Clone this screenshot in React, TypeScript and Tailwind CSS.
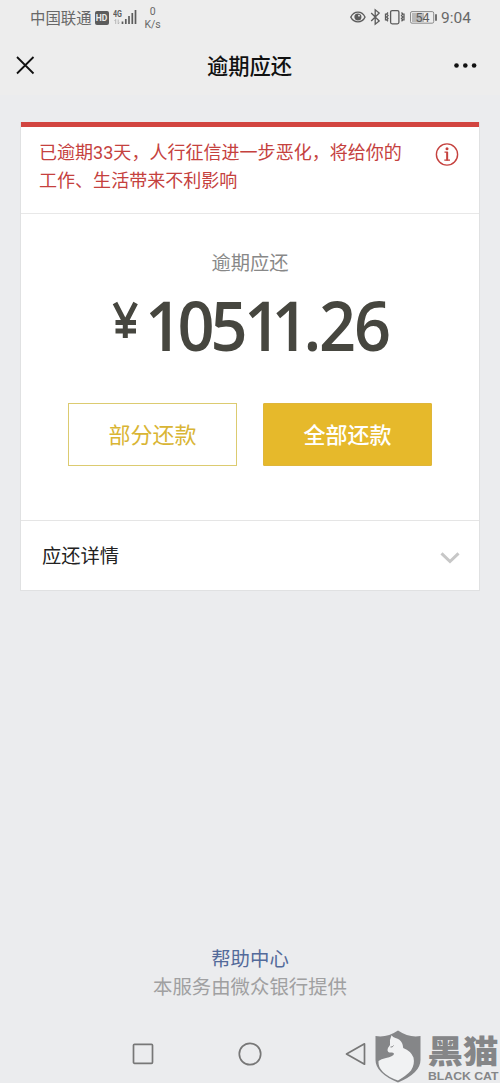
import React from "react";

function StatusBar() {
  return (
    <div className="flex h-[36px] items-start justify-between pl-[30px] pr-[28px] text-[#686868]">
      <div className="flex items-start">
        <span className="mt-[8px] text-[15.4px] leading-[22px]">中国联通</span>
        <span className="ml-[3px] mt-[11px] flex h-[14px] w-[14px] items-center justify-center rounded-[2px] bg-[#5c5c5c] font-['Roboto',sans-serif] text-[8.5px] font-bold text-[#ededed]">
          HD
        </span>
        <svg className="ml-[4px] mt-[8px]" width="26" height="18" viewBox="0 0 26 18">
          <text x="0" y="9" fontSize="8.5" fontWeight="700" fontFamily="Roboto, sans-serif" fill="#5c5c5c" textLength="9" lengthAdjust="spacingAndGlyphs">4G</text>
          <path d="M2.7 16v-4.5l-1.2 1.4M5.2 11.5v4.5l1.2-1.4" stroke="#aaa" strokeWidth=".8" fill="none" />
          <path d="M9.5 16v-2.5M12.800 16v-5M16 16v-8M19.300 16v-11M22.500 16v-14" stroke="#5c5c5c" strokeWidth="1.700" />
        </svg>
        <span className="ml-[5px] mt-[6px] flex w-[18px] flex-col items-center font-['Roboto',sans-serif] text-[10.500px] leading-[12.500px]">
          <span>0</span>
          <span>K/s</span>
        </span>
      </div>
      <div className="flex items-start">
        <svg className="mt-[7px]" width="90" height="20" viewBox="0 0 90 20" fill="none" stroke="#5c5c5c" strokeWidth="1.300">
          <path d="M.8 10.100C4 3.400 12 3.400 15 10.100 12 16.400 4 16.400.8 10.100Z" />
          <circle cx="7.900" cy="10" r="2.900" fill="#5c5c5c" />
          <circle cx="9" cy="8.700" r=".9" fill="#ededed" stroke="none" />
          <path d="M21.200 6 29.200 14l-4 3.200V2.800l4 3.200-8 8" />
          <rect x="40.600" y="3.600" width="8.300" height="13.200" rx="1.500" />
          <path d="M38 5.500l-1.300 1.500 1.300 1.500-1.300 1.500 1.300 1.500-1.300 1.500 1.300 1.300M35.500 6.500v7M51.500 5.500l1.300 1.500-1.300 1.500 1.300 1.500-1.300 1.500 1.300 1.500-1.300 1.300M54 6.500v7" strokeWidth="1.300" />
          <rect x="60.500" y="4.600" width="23.200" height="11.600" rx="1.500" stroke="#8b8b8b" strokeWidth="1" />
          <rect x="62" y="6" width="12" height="9" fill="#b8b8b8" stroke="none" />
          <path d="M86 7.300v6.400" strokeWidth="1.700" />
          <text x="65.500" y="14.600" fontFamily="Roboto, sans-serif" fontSize="12.500" fill="#5c5c5c" stroke="none">54</text>
        </svg>
        <span className="ml-[1px] mt-[7px] w-[31px] whitespace-nowrap font-['Roboto',sans-serif] text-[15.500px] leading-[22px]">9:04</span>
      </div>
    </div>
  );
}

function TitleBar() {
  return (
    <header className="flex h-[59px] items-center justify-between pl-[16px] pr-[22px]">
      <svg width="30" height="20" viewBox="0 0 30 20" className="text-[#111]">
        <path d="M1 1 17.500 17.500M17.500 1 1 17.500" stroke="currentColor" strokeWidth="1.800" />
      </svg>
      <h1 className="mt-[2px] text-[21.300px] font-medium leading-[32px] text-[#111]">逾期应还</h1>
      <svg width="25" height="6" viewBox="0 0 25 6" fill="#111">
        <circle cx="3.500" cy="2.500" r="2.300" />
        <circle cx="12.300" cy="2.500" r="2.300" />
        <circle cx="21.100" cy="2.500" r="2.300" />
      </svg>
    </header>
  );
}

function Amount() {
  return (
    <div className="mt-[17px] flex h-[66px] justify-center text-[#46463f]">
      <svg width="300" height="66" viewBox="-10 0 300 66" fill="currentColor" className="overflow-visible">
        <path d="M5 8 15.300 28M25.600 8 15.300 28M15.300 26v17M5.500 27.500h20.500M5.500 36h20.500" stroke="currentColor" strokeWidth="5" fill="none" />
        <text
          x="37.2 71.8 106.9 142.5 171.8 205.9 222.3 259.6"
          y="56"
          transform="scale(.94 1)"
          fontFamily="'Open Sans', sans-serif"
          fontSize="69"
          fontWeight="650"
        >
          10511.26
        </text>
      </svg>
    </div>
  );
}

function Card() {
  return (
    <main className="mx-[20px] mt-[27px] h-[469px] border border-t-0 border-[#e0e1e2] bg-white">
      <div className="h-[5px] bg-[#d24540]" />
      <section className="flex h-[87px] justify-between border-b border-[#e8e8e8] pl-[18px] pr-[20px] pt-[12px] text-[#c5413e]">
        <p className="whitespace-nowrap text-[18.050px] leading-[28px]">
          已逾期33天，人行征信进一步恶化，将给你的
          <br />
          工作、生活带来不利影响
        </p>
        <svg className="mt-[3px]" width="24" height="24" viewBox="0 0 24 24" fill="none" stroke="currentColor">
          <circle cx="12" cy="12.500" r="10.600" strokeWidth="1.400" />
          <path d="M9.500 10.200h2.700v8M9.300 18.200h5.700" strokeWidth="1.200" />
          <path d="M12.200 10v8.500" strokeWidth="1.900" />
          <circle cx="12" cy="6.800" r="1.500" fill="currentColor" stroke="none" />
        </svg>
      </section>
      <section className="h-[307px] border-b border-[#e5e5e5] pt-[36px]">
        <h2 className="text-center text-[19.300px] leading-[28px] text-[#888]">逾期应还</h2>
        <Amount />
        <div className="mt-[42px] flex justify-center gap-[26px] text-[22px]">
          <button className="h-[63px] w-[169px] border border-[#dccb70] pt-[2px] text-[#d9b534]">部分还款</button>
          <button className="h-[63px] w-[169px] rounded-[1px] border border-[#dfb63a] bg-[#e6b92b] pt-[2px] font-medium text-white">全部还款</button>
        </div>
      </section>
      <section className="flex h-[69px] items-center justify-between pl-[21px] pr-[19px] text-[#222]">
        <span className="mt-[3px] text-[19.300px] leading-[28px]">应还详情</span>
        <svg className="mt-[4px]" width="20" height="12" viewBox="0 0 20 12">
          <path d="M1.500 1.300 10 9.500 18.500 1.300" fill="none" stroke="#c7c7c7" strokeWidth="3" />
        </svg>
      </section>
    </main>
  );
}

function Watermark() {
  return (
    <svg className="absolute left-[374px] top-[5px] overflow-visible" width="126" height="54" viewBox="0 0 126 54">
      <path d="M1.500 6Q13 8 24 .5 35 8 46.500 6v24q0 13-22.500 22.500Q1.500 43 1.500 30Z" fill="#858688" />
      <path d="M17.500 5.300Q19 7.500 21.500 8q4.500 1 6.500 5 1 2 1.200 5 7.800 3 10.300 9.500 1.500 7-2.500 13-4.500 5-13 10Q14 47 9 42q-5-5-4.500-11 2.500-2 7.500-3 7-1.500 8-4 0-1.500-2-1.500-4.500.5-4.500-2.500 0-2 2.500-5-.5-6 1.500-9.700Z" fill="#f1f2f3" />
      <path d="M16.500 17q2 .5 3-1.500" stroke="#858688" fill="none" />
      <text x="53.500" y="32.500" fontFamily="'Noto Sans CJK SC', sans-serif" fontWeight="900" fontSize="32" textLength="71" lengthAdjust="spacingAndGlyphs" fill="#858688">黑猫</text>
      <text x="54" y="50" fontFamily="'Liberation Sans', sans-serif" fontWeight="700" fontSize="11" textLength="70.500" lengthAdjust="spacingAndGlyphs" fill="#858688">BLACK CAT</text>
    </svg>
  );
}

function NavigationBar() {
  return (
    <nav className="relative flex h-[58px] items-center pl-[132px] text-[#777]">
      <svg width="236" height="26" viewBox="0 0 236 26" fill="none" stroke="currentColor" strokeWidth="1.700">
        <rect x="1.500" y="3.300" width="19" height="19" rx="1" />
        <circle cx="118" cy="13" r="10.700" />
        <path d="M232.500 2.800v20.400L214.500 13Z" strokeLinejoin="round" />
      </svg>
      <Watermark />
    </nav>
  );
}

export default function App() {
  return (
    <div className="flex h-[1083px] w-[500px] flex-col overflow-hidden bg-[#ebecee] font-['Roboto','Noto_Sans_CJK_SC',sans-serif]">
      <div className="bg-[#ededed]">
        <StatusBar />
        <TitleBar />
      </div>
      <Card />
      <footer className="mt-auto pb-[23px] text-center text-[19.400px] leading-[28px]">
        <p className="text-[#536a9a]">帮助中心</p>
        <p className="text-[#a0a0a1]">本服务由微众银行提供</p>
      </footer>
      <NavigationBar />
    </div>
  );
}
